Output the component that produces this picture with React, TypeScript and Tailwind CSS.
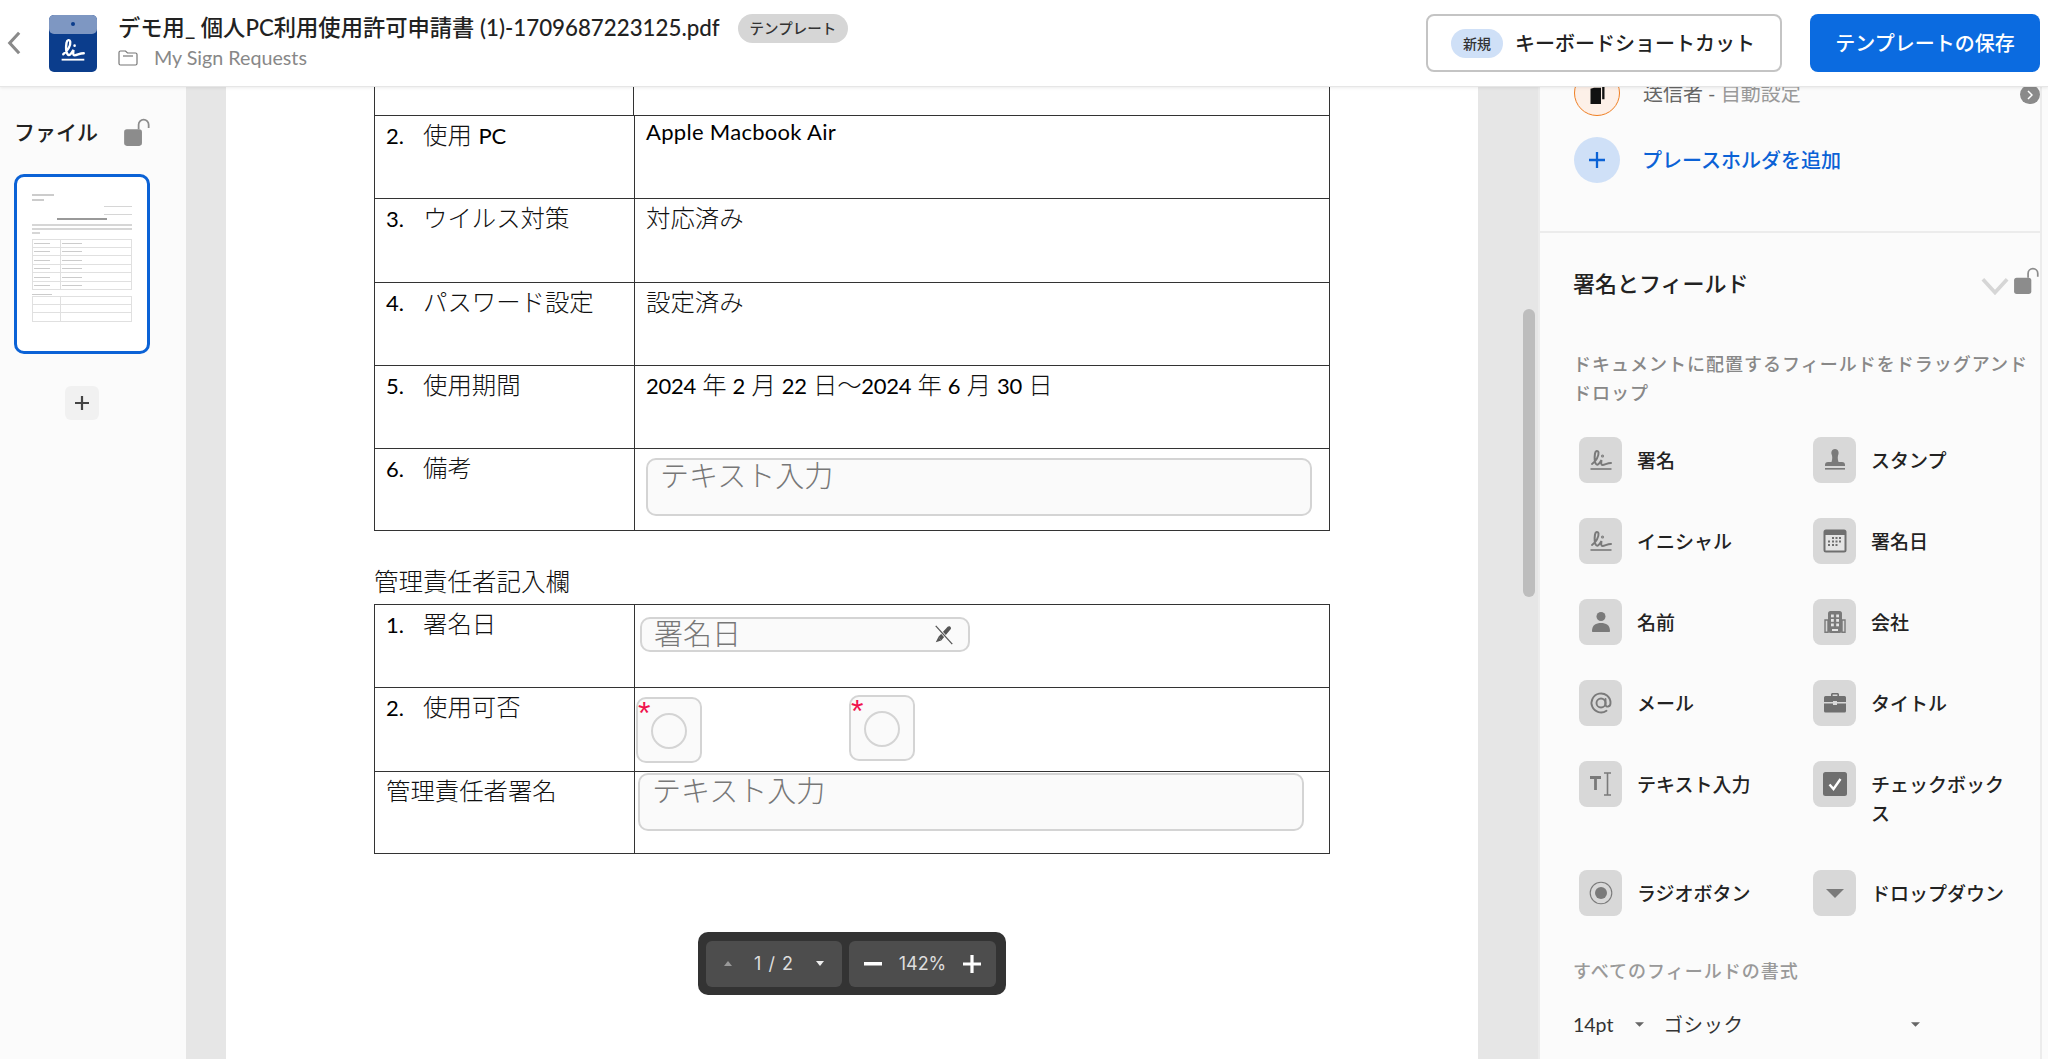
import React from 'react';

const CJK = "font-['Lato','Noto_Sans_CJK_JP',sans-serif]";

function Lock({ className }: { className?: string }) {
    return (
        <svg viewBox="0 0 26 26" className={className}>
            <rect x="1" y="10" width="16" height="15" rx="2.5" fill="#8c8c8c" />
            <path d="M14 10V6a4.5 4.5 0 0 1 9 0v3" fill="none" stroke="#8c8c8c" strokeWidth="1.6" />
        </svg>
    );
}

const liPath = 'M3 16C7 13 10 8 9.5 4.500 9 2 6.500 2.500 6 5.500 5.500 9 5.500 14 7 16 8.500 18 10.500 15.500 12.500 12 12 15 12 17 13.500 17 16 17 18 15 22 15';

function SignMark({ stroke = '#7a7a7a' }: { stroke?: string }) {
    return (
        <svg viewBox="0 0 24 24" className="w-[24px] h-[24px]" fill="none" stroke={stroke} strokeWidth="2" strokeLinecap="round">
            <path d={liPath} />
            <circle cx="13.5" cy="8" r="0.5" fill={stroke} />
            <path d="M1.5 21h21" strokeLinecap="butt" strokeWidth="1.6" />
        </svg>
    );
}

function StampIcon() {
    return (
        <svg viewBox="0 0 24 24" className="w-[24px] h-[24px]" fill="#7a7a7a">
            <path d="M12 1c3 0 4 3 3.5 5-1 2-1 5 0 8h-7c1-3 1-6 0-8C8 4 9 1 12 1z" />
            <path d="M5 14h14a3 3 0 0 1 3 3v1H2v-1a3 3 0 0 1 3-3z" />
            <rect x="2" y="20" width="20" height="1.6" />
        </svg>
    );
}

function CalendarIcon() {
    return (
        <svg viewBox="0 0 24 24" className="w-[24px] h-[24px]">
            <rect x="0.5" y="0.5" width="23" height="23" rx="2.5" fill="#6f6f6f" />
            <rect x="2.5" y="6" width="19" height="15.5" fill="#e4e4e4" />
            <g fill="#6f6f6f">
                <rect x="9" y="8" width="2" height="2" /><rect x="12.5" y="8" width="2" height="2" /><rect x="16" y="8" width="2" height="2" />
                <rect x="5" y="11.5" width="2" height="2" /><rect x="9" y="11.5" width="2" height="2" /><rect x="12.5" y="11.5" width="2" height="2" /><rect x="16" y="11.5" width="2" height="2" />
                <rect x="5" y="15" width="2" height="2" /><rect x="9" y="15" width="2" height="2" /><rect x="12.5" y="15" width="2" height="2" />
            </g>
        </svg>
    );
}

function PersonIcon() {
    return (
        <svg viewBox="0 0 24 24" className="w-[24px] h-[24px]" fill="#7a7a7a">
            <circle cx="12" cy="6.5" r="4.5" />
            <path d="M3 21c0-6 4-8 9-8s9 2 9 8c0 .6-.4 1-1 1H4c-.6 0-1-.4-1-1z" />
        </svg>
    );
}

function BuildingIcon() {
    return (
        <svg viewBox="0 0 24 24" className="w-[24px] h-[24px]">
            <rect x="5" y="1" width="14" height="22" rx="2.5" fill="#7a7a7a" />
            <path d="M2 10h3v12.3H2zM19 10h3v12.3h-3z" fill="none" stroke="#7a7a7a" strokeWidth="1.4" />
            <g fill="#e4e4e4">
                <rect x="8" y="4.5" width="2.8" height="2.8" /><rect x="13.2" y="4.5" width="2.8" height="2.8" />
                <rect x="8" y="9" width="2.8" height="2.8" /><rect x="13.2" y="9" width="2.8" height="2.8" />
                <rect x="8" y="13.5" width="2.8" height="2.8" /><rect x="13.2" y="13.5" width="2.8" height="2.8" />
                <rect x="9" y="19" width="6" height="2" />
            </g>
        </svg>
    );
}

function AtIcon() {
    return (
        <svg viewBox="0 0 24 24" className="w-[24px] h-[24px]" fill="none" stroke="#7a7a7a" strokeWidth="1.9" strokeLinecap="round">
            <circle cx="12" cy="12" r="4.5" />
            <path d="M16.5 8v5.500c0 3 5 3 5-1.500a9.500 9.500 0 1 0-4 7.700" />
        </svg>
    );
}

function BriefcaseIcon() {
    return (
        <svg viewBox="0 0 24 24" className="w-[24px] h-[24px]" fill="#6f6f6f">
            <path d="M8 5V3.500C8 2.700 8.700 2 9.500 2h5c.8 0 1.500.7 1.500 1.500V5h-1.600V3.600H9.600V5z" />
            <path d="M2.500 5h19A1.500 1.500 0 0 1 23 6.500V11H14v-1h-4v1H1V6.500A1.500 1.500 0 0 1 2.500 5z" />
            <path d="M1 12.500h9V14h4v-1.500h9V20a1.500 1.500 0 0 1-1.500 1.500h-19A1.500 1.500 0 0 1 1 20z" />
        </svg>
    );
}

function TextInputIcon() {
    return (
        <svg viewBox="0 0 24 24" className="w-[24px] h-[24px]" fill="none" stroke="#7a7a7a">
            <path d="M1 5.500h11M6.500 5.500V18" strokeWidth="2.8" />
            <path d="M15 1h7M15 23h7M18.500 1v22" strokeWidth="1.6" />
        </svg>
    );
}

function CheckIcon() {
    return (
        <svg viewBox="0 0 24 24" className="w-[24px] h-[24px]">
            <rect width="24" height="24" rx="2.5" fill="#6f6f6f" />
            <path d="M6.500 12.500l4 4.500 7-10" fill="none" stroke="#fff" strokeWidth="2.4" />
        </svg>
    );
}

function RadioIcon() {
    return (
        <svg viewBox="0 0 24 24" className="w-[24px] h-[24px]">
            <circle cx="12" cy="12" r="10.8" fill="none" stroke="#7a7a7a" strokeWidth="1.1" />
            <circle cx="12" cy="12" r="6" fill="#7a7a7a" />
        </svg>
    );
}

function DropIcon() {
    return (
        <svg viewBox="0 0 24 24" className="w-[24px] h-[24px]" fill="#7a7a7a">
            <path d="M3 8h18l-9 9z" />
        </svg>
    );
}

const fields: { label: string; icon: React.ReactNode; h: string }[][] = [
    [{ label: '署名', icon: <SignMark />, h: 'h-[81px]' }, { label: 'スタンプ', icon: <StampIcon />, h: 'h-[81px]' }],
    [{ label: 'イニシャル', icon: <SignMark />, h: 'h-[81px]' }, { label: '署名日', icon: <CalendarIcon />, h: 'h-[81px]' }],
    [{ label: '名前', icon: <PersonIcon />, h: 'h-[81px]' }, { label: '会社', icon: <BuildingIcon />, h: 'h-[81px]' }],
    [{ label: 'メール', icon: <AtIcon />, h: 'h-[81px]' }, { label: 'タイトル', icon: <BriefcaseIcon />, h: 'h-[81px]' }],
    [{ label: 'テキスト入力', icon: <TextInputIcon />, h: 'h-[109px]' }, { label: 'チェックボックス', icon: <CheckIcon />, h: 'h-[109px]' }],
    [{ label: 'ラジオボタン', icon: <RadioIcon />, h: 'h-[80px]' }, { label: 'ドロップダウン', icon: <DropIcon />, h: 'h-[80px]' }],
];

function Field({ label, icon, h }: { label: string; icon: React.ReactNode; h: string }) {
    return (
        <div className={`flex items-start gap-[15px] ${h}`}>
            <div className="w-[43px] h-[46px] shrink-0 rounded-[8px] bg-[#d8d8d8] flex items-center justify-center">{icon}</div>
            <div className="w-[135px] pt-[9px] text-[19px] leading-[29px] font-medium text-[#222]">{label}</div>
        </div>
    );
}

// latin text in the pdf is narrower and darker than the japanese around it
function L({ children }: { children: React.ReactNode }) {
    return <span className="text-[22px] font-normal text-black">{children}</span>;
}

function Row({ num, left, right, last }: { num?: string; left: React.ReactNode; right?: React.ReactNode; last?: boolean }) {
    return (
        <div className={`flex h-[83.3px] border-t border-[#333] ${last ? 'border-b' : ''}`}>
            <div className="w-[260px] shrink-0 border-r border-[#333] pl-[11px] pt-[3px] text-[24.4px] leading-[32px] text-[#111] whitespace-pre">
                {num && <span className="inline-block w-[37px] text-[22px] font-normal text-black">{num}</span>}{left}
            </div>
            <div className="flex-1 relative pl-[11px] pt-[3px] text-[24.4px] leading-[32px] text-[#111]">{right}</div>
        </div>
    );
}

function InputBox({ text, className }: { text: string; className: string }) {
    return (
        <div className={`rounded-[10px] border-2 border-[#d4d4d4] bg-[#fafafa] pl-[12px] text-[29px] leading-[32px] text-[#777] ${className}`}>{text}</div>
    );
}

function RadioBox({ className }: { className: string }) {
    return (
        <div className={`absolute w-[66px] h-[66px] rounded-[10px] border-2 border-[#d4d4d4] bg-[#fafafa] flex items-center justify-center ${className}`}>
            <span className="absolute left-[0px] top-[-2px] text-[32px] leading-[32px] font-normal text-[#f0134d] font-['Liberation_Sans',sans-serif]">*</span>
            <span className="w-[36px] h-[36px] mt-[2px] rounded-full border-2 border-[#d4d4d4]" />
        </div>
    );
}

export default function App() {
    return (
        <div className={`w-[2048px] h-[1059px] overflow-hidden flex flex-col bg-white ${CJK}`}>
            <header className="h-[87px] shrink-0 flex items-center bg-white border-b border-[#e6e6e6] shadow-[0_1px_3px_rgba(0,0,0,0.08)] relative z-10">
                <svg viewBox="0 0 16 28" className="w-[14px] h-[24px] ml-[7px] mr-[28px]" fill="none" stroke="#8a8a8a" strokeWidth="3.6">
                    <path d="M14 2L3 14l11 12" />
                </svg>
                <svg viewBox="0 0 48 57" className="w-[48px] h-[57px] shrink-0">
                    <rect width="48" height="57" rx="5" fill="#0b3d8c" />
                    <path d="M0 5a5 5 0 0 1 5-5h38a5 5 0 0 1 5 5v9a5 5 0 0 1-5 5H5a5 5 0 0 1-5-5z" fill="#7e97c2" />
                    <circle cx="24" cy="9" r="2" fill="#0b3d8c" />
                    <g transform="translate(11 22) scale(1.08)">
                        <path d={liPath} fill="none" stroke="#fff" strokeWidth="2.2" strokeLinecap="round" />
                        <circle cx="13.5" cy="8" r="1.2" fill="#fff" />
                        <path d="M1.5 21h21" stroke="#fff" strokeWidth="1.7" />
                    </g>
                </svg>
                <div className="ml-[21px] flex flex-col -mt-[2px]">
                    <div className="flex items-center">
                        <span className="text-[22.3px] leading-[30px] font-medium text-[#222]">デモ用_ 個人PC利用使用許可申請書 (1)-1709687223125.pdf</span>
                        <span className="ml-[18px] h-[29px] px-[12px] rounded-full bg-[#d6d6d6] text-[14.5px] leading-[29px] font-medium text-[#333]">テンプレート</span>
                    </div>
                    <div className="flex items-center mt-[2px]">
                        <svg viewBox="0 0 20 18" className="w-[20px] h-[18px]" fill="none" stroke="#777" strokeWidth="1.2">
                            <path d="M1 3.500A1.500 1.500 0 0 1 2.500 2h5l2 2h8A1.500 1.500 0 0 1 19 5.500v9a1.500 1.500 0 0 1-1.500 1.500h-15A1.500 1.500 0 0 1 1 14.500z" />
                            <path d="M5 7h10" />
                        </svg>
                        <span className="ml-[16px] text-[19.7px] leading-[26px] text-[#888]">My Sign Requests</span>
                    </div>
                </div>
                <div className="ml-auto flex items-center">
                    <div className="w-[356px] h-[58px] rounded-[8px] border-2 border-[#c4c4c4] bg-white flex items-center pl-[23px]">
                        <span className="w-[52px] h-[29px] rounded-full bg-[#cfe0f7] text-[14px] leading-[29px] text-center font-medium text-[#333]">新規</span>
                        <span className="ml-[12px] text-[20px] font-medium text-[#222]">キーボードショートカット</span>
                    </div>
                    <div className="ml-[28px] mr-[8px] w-[230px] h-[58px] rounded-[8px] bg-[#0b6be0] text-white text-[20px] leading-[58px] text-center font-medium">テンプレートの保存</div>
                </div>
            </header>
            <div className="flex-1 flex min-h-0">
                <aside className="w-[186px] shrink-0 bg-[#fbfbfb] flex flex-col pl-[14px]">
                    <div className="flex items-center h-[36px] mt-[27px]">
                        <span className="text-[21px] font-medium text-[#222]">ファイル</span>
                        <Lock className="w-[29px] h-[29px] ml-[25px]" />
                    </div>
                    <div className="w-[136px] h-[180px] mt-[24px] rounded-[10px] border-[3px] border-[#0b62d6] bg-white relative overflow-hidden">
                        <div className="absolute left-[15px] top-[15px] w-[100px] h-[130px] flex flex-col opacity-60 blur-[0.4px]">
                            <div className="h-[2px] w-[22px] bg-[#aaa] mt-[2px]" />
                            <div className="h-[2px] w-[12px] bg-[#aaa] mt-[3px]" />
                            <div className="h-[1px] w-[28px] bg-[#bbb] mt-[5px] self-end" />
                            <div className="h-[1px] w-[28px] bg-[#bbb] mt-[7px] self-end" />
                            <div className="h-[3px] w-[50px] bg-[#555] mt-[3px] self-center" />
                            <div className="h-[2px] w-full bg-[#bbb] mt-[4px]" />
                            <div className="h-[2px] w-full bg-[#bbb] mt-[2px]" />
                            <div className="h-[2px] w-[8px] bg-[#bbb] mt-[2px]" />
                            {[0, 1, 2, 3, 4, 5].map(i => (
                                <div key={i} className={`h-[9px] border border-[#ccc] flex ${i === 0 ? 'mt-[5px]' : 'border-t-0'}`}>
                                    <div className="w-[28px] border-r border-[#ccc] flex items-center pl-[1px]"><div className="h-[1px] w-[16px] bg-[#aaa]" /></div>
                                    <div className="flex-1 flex items-center pl-[1px]"><div className="h-[1px] w-[20px] bg-[#aaa]" /></div>
                                </div>
                            ))}
                            <div className="h-[1px] w-[20px] bg-[#aaa] mt-[4px]" />
                            {[0, 1, 2].map(i => (
                                <div key={i} className={`h-[9px] border border-[#ccc] flex ${i === 0 ? 'mt-[1px]' : 'border-t-0'}`}>
                                    <div className="w-[28px] border-r border-[#ccc]" />
                                </div>
                            ))}
                        </div>
                    </div>
                    <div className="w-[34px] h-[34px] mt-[32px] ml-[51px] rounded-[6px] bg-[#f1f1f1] flex items-center justify-center">
                        <svg viewBox="0 0 14 14" className="w-[14px] h-[14px]" stroke="#444" strokeWidth="2.2"><path d="M7 0v14M0 7h14" /></svg>
                    </div>
                </aside>
                <main className="flex-1 min-w-0 relative bg-[#e6e6e6]">
                    <div className="w-[1252px] ml-[40px] h-full bg-white pl-[148px] font-['Lato','Noto_Sans_CJK_JP',sans-serif] font-light">
                        <div className="w-[956px]">
                            <div className="flex h-[28px] border-0">
                                <div className="w-[260px] border-l border-r border-[#333]" />
                                <div className="flex-1 border-r border-[#333]" />
                            </div>
                            <div className="border-l border-r border-[#333]">
                                <Row num="2." left={<>使用 <L>PC</L></>} right={<div className="-mt-[4px] tracking-[0.3px]"><L>Apple Macbook Air</L></div>} />
                                <Row num="3." left="ウイルス対策" right="対応済み" />
                                <Row num="4." left="パスワード設定" right="設定済み" />
                                <Row num="5." left="使用期間" right={<div className="tracking-[-0.3px]"><L>2024</L> 年 <L>2</L> 月 <L>22</L> 日〜<L>2024</L> 年 <L>6</L> 月 <L>30</L> 日</div>} />
                                <Row num="6." left="備考" last right={<InputBox text="テキスト入力" className="absolute left-[11px] top-[9px] w-[666px] h-[58px]" />} />
                            </div>
                            <div className="h-[72.5px] pt-[35px] text-[24.5px] leading-[32px] text-[#111]">管理責任者記入欄</div>
                            <div className="border-l border-r border-[#333]">
                                <Row num="1." left="署名日" right={
                                    <div className="absolute left-[5px] top-[12px] w-[330px] h-[35px] rounded-[10px] border-2 border-[#d4d4d4] bg-[#fafafa] pl-[12px] text-[29px] leading-[32px] text-[#777] flex items-center">
                                        署名日
                                        <svg viewBox="0 0 24 24" className="absolute right-[13px] top-[5px] w-[22px] h-[22px]">
                                            <path d="M6 14L16 3c2-2 5 1 3 3L9 18z" fill="#555" />
                                            <path d="M6 14l-3 6 6-2" fill="#555" />
                                            <path d="M3 2l18 20" stroke="#fafafa" strokeWidth="3" />
                                            <path d="M3 2l18 20" stroke="#555" strokeWidth="1.4" />
                                        </svg>
                                    </div>
                                } />
                                <Row num="2." left="使用可否" right={
                                    <>
                                        <RadioBox className="left-[1px] top-[9px]" />
                                        <RadioBox className="left-[214px] top-[7px]" />
                                    </>
                                } />
                                <Row left="管理責任者署名" last right={<InputBox text="テキスト入力" className="absolute left-[3px] top-[1px] w-[666px] h-[58px]" />} />
                            </div>
                        </div>
                    </div>
                    <div className="absolute left-[512px] top-[845px] w-[308px] h-[63px] rounded-[10px] bg-[#333] flex items-center gap-[7px] px-[8px] font-['Inter','Noto_Sans',sans-serif]">
                        <div className="w-[136px] h-[46px] rounded-[6px] bg-[#4d4d4d] flex items-center justify-between px-[18px] text-[#ddd] text-[18px]">
                            <svg viewBox="0 0 8 5" className="w-[8px] h-[5px]" fill="#999"><path d="M4 0l4 5H0z" /></svg>
                            <span className="tracking-[1px]">1 / 2</span>
                            <svg viewBox="0 0 8 5" className="w-[8px] h-[5px]" fill="#eee"><path d="M0 0h8L4 5z" /></svg>
                        </div>
                        <div className="w-[147px] h-[46px] rounded-[6px] bg-[#4d4d4d] flex items-center justify-between px-[15px] text-[#ddd] text-[18px]">
                            <svg viewBox="0 0 18 4" className="w-[18px] h-[4px]" fill="#fff"><rect width="18" height="3.5" /></svg>
                            <span>142%</span>
                            <svg viewBox="0 0 18 18" className="w-[18px] h-[18px]" stroke="#fff" strokeWidth="3.2"><path d="M9 0v18M0 9h18" /></svg>
                        </div>
                    </div>
                    <div className="absolute right-[3px] top-[222px] w-[12px] h-[288px] rounded-full bg-[#bdbdbd]" />
                </main>
                <aside className="w-[504px] shrink-0 bg-[#fbfbfb] border-l-2 border-r-2 border-[#ececec] flex flex-col">
                    <div className="h-[146px] shrink-0 border-b-2 border-[#ececec] pl-[34px] relative">
                        <div className="flex items-center h-[46px] -mt-[17px]">
                            <div className="w-[46px] h-[46px] rounded-full border-[1.5px] border-[#f07f23] bg-[#fdf0e8] flex items-center justify-center shrink-0">
                                <svg viewBox="0 0 14 18" className="w-[17px] h-[21px]" fill="#111"><path d="M1 5l3-1h6v14H1z" /><path d="M5 2l3-1h5v13h-2V3H5z" /></svg>
                            </div>
                            <span className="ml-[23px] text-[20px] text-[#666]">送信者 - <span className="text-[#999]">自動設定</span></span>
                            <span className="absolute right-[0px] top-[-2px] w-[20px] h-[19px] rounded-full bg-[#8a8a8a] flex items-center justify-center">
                                <svg viewBox="0 0 6 10" className="w-[6px] h-[10px]" fill="none" stroke="#fff" strokeWidth="1.5"><path d="M1 1l4 4-4 4" /></svg>
                            </span>
                        </div>
                        <div className="flex items-center h-[46px] mt-[21px]">
                            <div className="w-[46px] h-[46px] rounded-full bg-[#cfe0f7] flex items-center justify-center shrink-0">
                                <svg viewBox="0 0 14 14" className="w-[16px] h-[16px]" stroke="#0b62d6" strokeWidth="2"><path d="M7 0v14M0 7h14" /></svg>
                            </div>
                            <span className="ml-[22px] text-[20px] font-medium text-[#0b62d6]">プレースホルダを追加</span>
                        </div>
                    </div>
                    <div className="pl-[33px] flex-1 min-h-0">
                        <div className="flex items-center justify-between h-[30px] mt-[35px]">
                            <span className="text-[22px] font-medium text-[#222]">署名とフィールド</span>
                            <div className="flex items-center gap-[4px] -mr-[1px]">
                                <svg viewBox="0 0 22 14" className="w-[28px] h-[17px] mt-[6px]" fill="none" stroke="#d6d6d6" strokeWidth="3"><path d="M1 1l10 11L21 1" /></svg>
                                <Lock className="w-[28px] h-[28px] -mt-[5px]" />
                            </div>
                        </div>
                        <p className="mt-[52px] w-[465px] text-[18px] leading-[29px] font-medium text-[#888] tracking-[1px]">ドキュメントに配置するフィールドをドラッグアンドドロップ</p>
                        <div className="mt-[29px] ml-[6px]">
                            {fields.map((row, i) => (
                                <div key={i} className="flex gap-[41px]">
                                    <Field {...row[0]} />
                                    <Field {...row[1]} />
                                </div>
                            ))}
                        </div>
                        <div className="mt-[8px] text-[18px] leading-[26px] font-medium text-[#999] tracking-[1px]">すべてのフィールドの書式</div>
                        <div className="flex items-center mt-[26px] text-[#333] text-[19.5px]">
                            <span>14pt</span>
                            <svg viewBox="0 0 10 5" className="w-[9px] h-[5px] ml-[22px]" fill="#666"><path d="M0 0h10L5 5z" /></svg>
                            <span className="ml-[19px] tracking-[0.5px]">ゴシック</span>
                            <svg viewBox="0 0 10 5" className="w-[9px] h-[5px] ml-[168px]" fill="#666"><path d="M0 0h10L5 5z" /></svg>
                        </div>
                    </div>
                </aside>
                <div className="w-[6px] shrink-0 bg-[#fbfbfb]" />
            </div>
        </div>
    );
}
